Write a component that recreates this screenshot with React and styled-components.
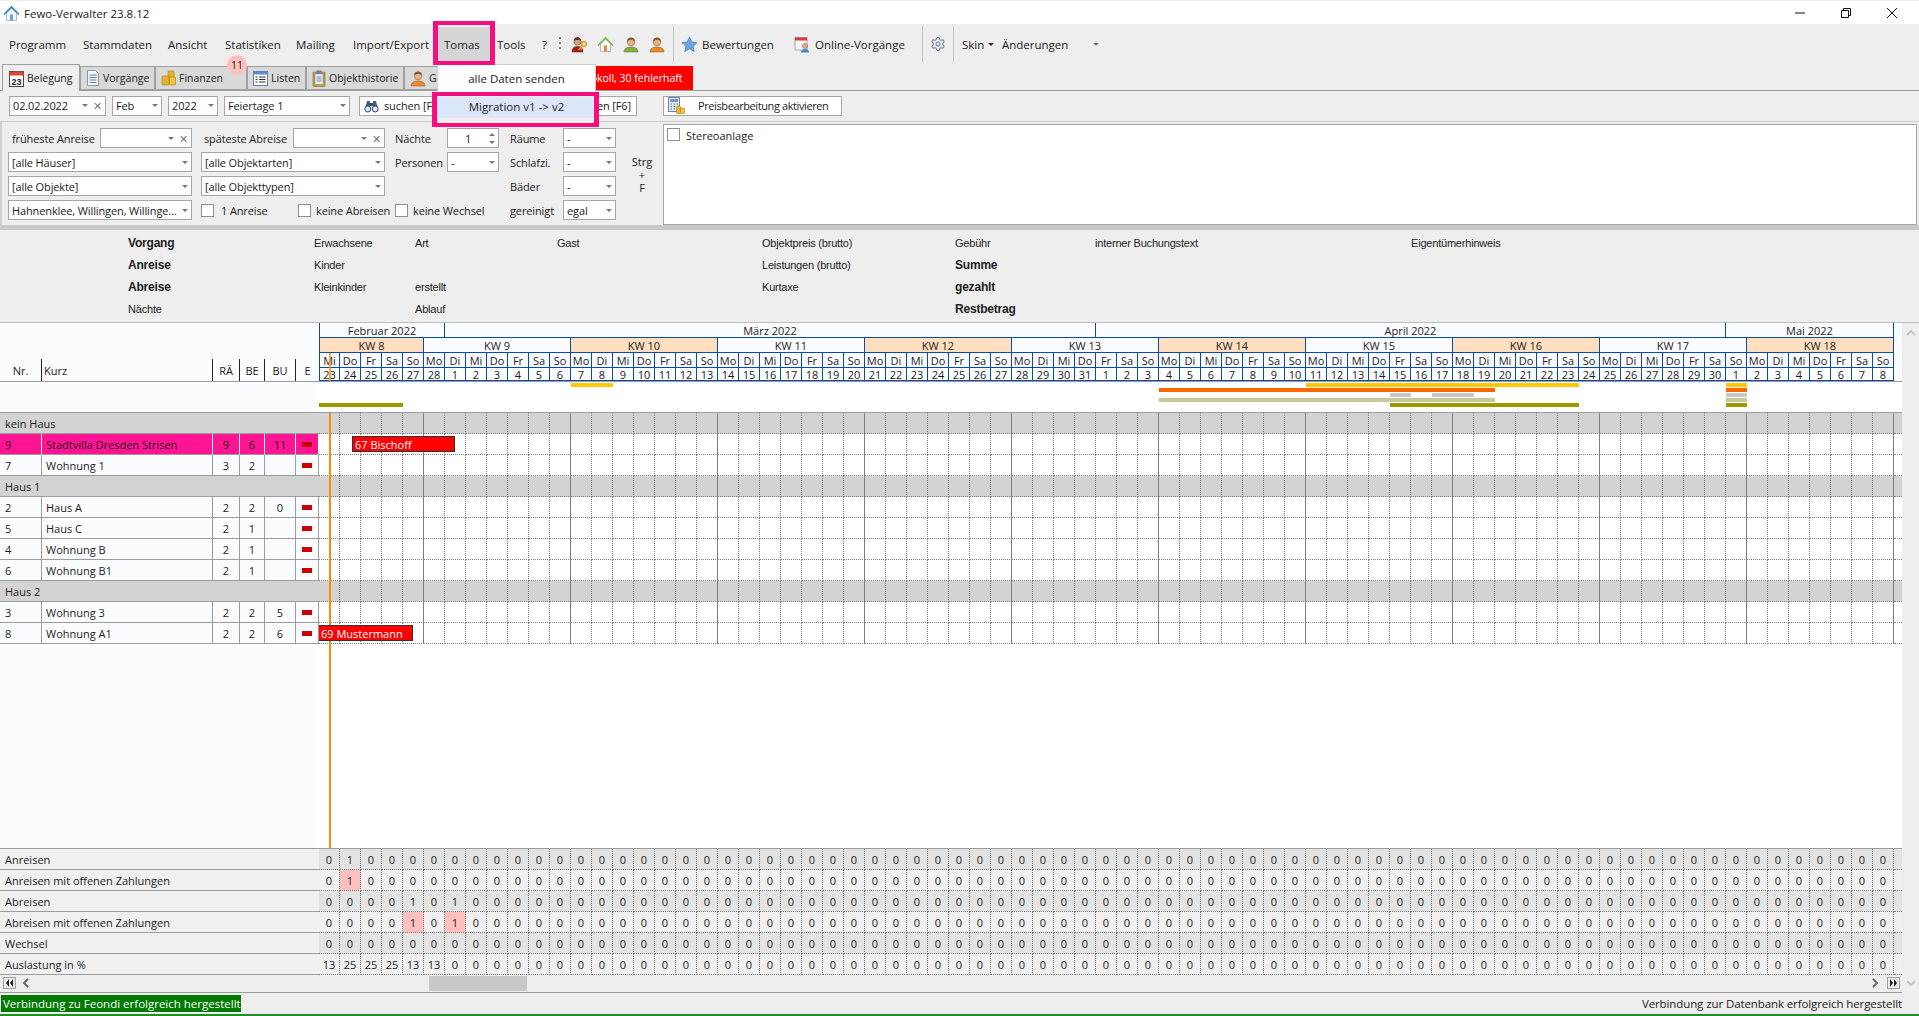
import React from "react";
import styled, { createGlobalStyle } from "styled-components";
import { Settings } from "lucide-react";

const DAY = 21;
const BLUE = "#0b4ba8";
const GRID = "#7d7d7d";
const WEEKDAYS = ["Mi", "Do", "Fr", "Sa", "So", "Mo", "Di"];
const dayIndexes = Array.from({ length: 75 }, (_, i) => i);
const dayNumber = (i) => new Date(2022, 1, 23 + i).getDate();
const isSunday = (i) => i % 7 === 4;

const months = [
  { label: "Februar 2022", days: 6 },
  { label: "März 2022", days: 31 },
  { label: "April 2022", days: 30 },
  { label: "Mai 2022", days: 8 },
];
const weeks = [8, 9, 10, 11, 12, 13, 14, 15, 16, 17, 18].map((n, i) => ({
  n,
  days: i === 0 ? 5 : 7,
}));

const occupancy = [
  { color: "#ffc800", top: 1, start: 12, days: 2 },
  { color: "#ffc800", top: 1, start: 47, days: 13 },
  { color: "#ffc800", top: 1, start: 67, days: 1 },
  { color: "#ff6600", top: 6, start: 40, days: 16 },
  { color: "#ff6600", top: 6, start: 67, days: 1 },
  { color: "#c8c8c8", top: 11, start: 51, days: 1 },
  { color: "#c8c8c8", top: 11, start: 53, days: 2 },
  { color: "#c8c8c8", top: 11, start: 67, days: 1 },
  { color: "#c8c89b", top: 16, start: 40, days: 16 },
  { color: "#c8c89b", top: 16, start: 67, days: 1 },
  { color: "#9b9b00", top: 21, start: 0, days: 4 },
  { color: "#9b9b00", top: 21, start: 51, days: 9 },
  { color: "#9b9b00", top: 21, start: 67, days: 1 },
];

const rows = [
  { group: "kein Haus" },
  { nr: 9, name: "Stadtvilla Dresden Strisen", ra: 9, be: 6, bu: 11, hot: true, booking: { label: "67 Bischoff", left: 33, width: 103 } },
  { nr: 7, name: "Wohnung 1", ra: 3, be: 2 },
  { group: "Haus 1" },
  { nr: 2, name: "Haus A", ra: 2, be: 2, bu: 0 },
  { nr: 5, name: "Haus C", ra: 2, be: 1 },
  { nr: 4, name: "Wohnung B", ra: 2, be: 1 },
  { nr: 6, name: "Wohnung B1", ra: 2, be: 1 },
  { group: "Haus 2" },
  { nr: 3, name: "Wohnung 3", ra: 2, be: 2, bu: 5 },
  { nr: 8, name: "Wohnung A1", ra: 2, be: 2, bu: 6, booking: { label: "69 Mustermann", left: 0, width: 94 } },
];

const totals = [
  { label: "Anreisen", values: { 1: 1 } },
  { label: "Anreisen mit offenen Zahlungen", values: { 1: 1 }, warn: [1] },
  { label: "Abreisen", values: { 4: 1, 6: 1 } },
  { label: "Abreisen mit offenen Zahlungen", values: { 4: 1, 6: 1 }, warn: [4, 6] },
  { label: "Wechsel", values: {} },
  { label: "Auslastung in %", values: { 0: 13, 1: 25, 2: 25, 3: 25, 4: 13, 5: 13 } },
];

const info = [
  ["Vorgang*", "Erwachsene", "Art", "Gast", "Objektpreis (brutto)", "Gebühr", "interner Buchungstext", "Eigentümerhinweis"],
  ["Anreise*", "Kinder", "", "", "Leistungen (brutto)", "Summe*", "", ""],
  ["Abreise*", "Kleinkinder", "erstellt", "", "Kurtaxe", "gezahlt*", "", ""],
  ["Nächte", "", "Ablauf", "", "", "Restbetrag*", "", ""],
];

const GlobalStyle = createGlobalStyle`
  html, body {
    margin: 0;
    padding: 0;
    overflow: hidden;
    background: #eeeeee;
  }
  body {
    font-family: "Open Sans", "Liberation Sans", sans-serif;
    font-size: 11.5px;
    color: #1c1c1c;
  }
`;

const Window = styled.div`
  position: relative;
  display: flex;
  flex-direction: column;
  width: 1919px;
  height: 1016px;
  overflow: hidden;
  background: #eeeeee;
`;

const TitleBar = styled.div`
  display: flex;
  align-items: center;
  flex: 0 0 24px;
  padding: 1px 0 0 3px;
  box-sizing: border-box;
  background: #ffffff;
  border-top: 1px solid #eeeeee;
  font-size: 11.5px;
`;
const TitleText = styled.span`
  margin-left: 4px;
  flex: 1;
`;
const WinButton = styled.div`
  display: flex;
  align-items: center;
  justify-content: center;
  width: 46px;
  height: 22px;
  &:last-child {
    margin-right: 4px;
  }
`;

const MenuBar = styled.div`
  display: flex;
  align-items: center;
  flex: 0 0 40px;
  padding-left: 2px;
`;
const MenuItem = styled.div`
  display: flex;
  align-items: center;
  box-sizing: border-box;
  width: ${(p) => p.$w}px;
  height: 34px;
  padding-left: 7px;
  background: ${(p) => (p.$open ? "#d6d6d6" : "transparent")};
  white-space: nowrap;
`;
const Grip = styled.div`
  width: 2px;
  height: 14px;
  margin: 0 5px 0 5px;
  background: repeating-linear-gradient(#8a8a8a 0 2px, transparent 2px 5px);
`;
const IconButton = styled.div`
  display: flex;
  align-items: center;
  justify-content: center;
  width: ${(p) => p.$w || 26}px;
  height: 24px;
`;
const BarSeparator = styled.div`
  width: 1px;
  height: 36px;
  margin: 0 ${(p) => p.$right || 0}px 0 ${(p) => p.$left || 0}px;
  background: #c4c4c4;
`;
const IconText = styled.div`
  display: flex;
  align-items: center;
  gap: 4px;
  width: ${(p) => p.$w}px;
  white-space: nowrap;
`;
const SmallCaret = styled.span`
  display: inline-block;
  flex: none;
  width: 0;
  height: 0;
  margin-left: ${(p) => p.$left || 0}px;
  border-left: 3px solid transparent;
  border-right: 3px solid transparent;
  border-top: 3px solid ${(p) => p.$color || "#333333"};
`;

const TabBar = styled.div`
  display: flex;
  align-items: flex-end;
  flex: 0 0 27px;
  box-sizing: border-box;
  padding-left: 2px;
  border-bottom: 1px solid #9c9c9c;
`;
const Tab = styled.div`
  position: relative;
  display: flex;
  align-items: center;
  gap: 3px;
  box-sizing: border-box;
  width: ${(p) => p.$w}px;
  height: ${(p) => (p.$active ? 27 : 24)}px;
  margin-bottom: ${(p) => (p.$active ? -1 : 0)}px;
  padding: 0 0 0 ${(p) => (p.$active ? 6 : 5)}px;
  background: ${(p) => (p.$active ? "#eeeeee" : "#d9d9d9")};
  border: 1px solid #a0a0a0;
  border-bottom: ${(p) => (p.$active ? "none" : "1px solid #a0a0a0")};
  font-size: 10.5px;
  white-space: nowrap;
`;
const AlertTab = styled.div`
  display: flex;
  align-items: center;
  box-sizing: border-box;
  width: 128px;
  height: 24px;
  padding-left: 5px;
  background: #ff0000;
  color: #ffffff;
  font-size: 10.5px;
  white-space: nowrap;
`;
const Badge = styled.span`
  position: absolute;
  top: -12px;
  right: -1px;
  display: flex;
  align-items: center;
  justify-content: center;
  width: 20px;
  height: 20px;
  border-radius: 50%;
  background: #ffc0c0;
  font-size: 10.5px;
`;

const Toolbar = styled.div`
  display: flex;
  align-items: center;
  flex: 0 0 31px;
  box-sizing: border-box;
  padding: 0 0 1px 9px;
  gap: 6px;
  border-bottom: 1px solid #cccccc;
`;
const Field = styled.div`
  display: flex;
  align-items: center;
  flex: none;
  box-sizing: border-box;
  width: ${(p) => p.$w}px;
  height: 20px;
  padding: 0 3px;
  background: #ffffff;
  border: 1px solid #a6a6a6;
  font-size: 11px;
  letter-spacing: -0.12px;
  white-space: nowrap;
`;
const FieldText = styled.span`
  flex: 1;
  min-width: 0;
`;
const Clear = styled.span`
  margin-left: 5px;
  color: #777777;
  font-size: 11px;
  line-height: 1;
`;
const ActionButton = styled(Field)`
  gap: 5px;
  justify-content: ${(p) => (p.$end ? "flex-end" : "flex-start")};
  margin-left: ${(p) => p.$left || 0}px;
  padding: 0 5px 0 4px;
`;
const ActionLabel = styled.span`
  margin-left: ${(p) => p.$left || 0}px;
  letter-spacing: ${(p) => (p.$tight ? "-0.4px" : "inherit")};
`;
const SpinArrows = styled.span`
  display: flex;
  flex-direction: column;
  gap: 5px;
`;
const SpinUp = styled.span`
  width: 0;
  height: 0;
  border-left: 3px solid transparent;
  border-right: 3px solid transparent;
  border-bottom: 3px solid #777777;
`;
const SpinDown = styled(SpinUp)`
  border-bottom: none;
  border-top: 3px solid #777777;
`;
const SpinValue = styled.span`
  flex: 1;
  padding-left: 14px;
`;

const FilterPanel = styled.div`
  display: flex;
  flex: 0 0 108px;
  box-sizing: border-box;
  padding: 2px 2px 0 2px;
  border-left: 2px solid #d0d0d0;
  border-bottom: 5px solid #c8c8c8;
`;
const FilterGrid = styled.div`
  display: grid;
  grid-template-columns: 193px 194px 115px 121px 32px;
  grid-template-rows: repeat(4, 20px);
  row-gap: 4px;
  padding: 4px 0 0 4px;
`;
const FilterCell = styled.div`
  display: flex;
  align-items: center;
  font-size: 11px;
  letter-spacing: -0.12px;
  white-space: nowrap;
`;
const FilterLabel = styled.span`
  flex: 0 0 ${(p) => p.$w}px;
  padding-left: ${(p) => p.$pad || 0}px;
  box-sizing: border-box;
`;
const CheckBox = styled.span`
  flex: none;
  box-sizing: border-box;
  width: 13px;
  height: 13px;
  margin-right: ${(p) => p.$gap}px;
  background: #ffffff;
  border: 1px solid #8f8f8f;
`;
const ShortcutHint = styled.div`
  grid-column: 5;
  grid-row: 2 / span 2;
  align-self: center;
  width: 22px;
  text-align: center;
  font-size: 11px;
  line-height: 13px;
`;
const FeatureList = styled.div`
  display: flex;
  align-items: flex-start;
  flex: 1;
  box-sizing: border-box;
  height: 101px;
  padding: 3px;
  background: #ffffff;
  border: 1px solid #a6a6a6;
  font-size: 11px;
`;

const InfoPanel = styled.div`
  display: grid;
  grid-template-columns: 186px 101px 142px 205px 193px 140px 316px 1fr;
  grid-template-rows: repeat(4, 22px);
  align-items: center;
  flex: 0 0 93px;
  box-sizing: border-box;
  padding: 2px 0 0 128px;
  border-bottom: 1px solid #bdbdbd;
  font-family: "Liberation Sans", sans-serif;
  font-size: 11px;
  letter-spacing: -0.2px;
`;
const InfoText = styled.span`
  font-weight: ${(p) => (p.$strong ? 700 : 400)};
  font-size: ${(p) => (p.$strong ? 12 : 11)}px;
`;

const MainArea = styled.div`
  display: flex;
  flex: 1;
  min-height: 0;
`;
const Content = styled.div`
  display: flex;
  flex-direction: column;
  width: 1902px;
  background: #ffffff;
  font-size: 11px;
`;
const VScroll = styled.div`
  display: flex;
  flex-direction: column;
  align-items: center;
  justify-content: space-between;
  flex: 1;
  padding: 6px 0 4px;
  box-sizing: border-box;
  color: #c0c0c0;
`;

const Header = styled.div`
  display: flex;
  flex: 0 0 59px;
  box-sizing: border-box;
  border-bottom: 1px solid #9c9c9c;
  background: #fbfcff;
`;
const HeaderLeft = styled.div`
  display: flex;
  align-items: flex-end;
  width: 319px;
`;
const HeaderCol = styled.div`
  display: flex;
  align-items: center;
  justify-content: ${(p) => (p.$left ? "flex-start" : "center")};
  box-sizing: border-box;
  width: ${(p) => p.$w}px;
  height: 22px;
  padding-left: ${(p) => (p.$left ? 2 : 0)}px;
  border-right: ${(p) => (p.$last ? "none" : "1px solid #222222")};
`;
const Timeline = styled.div`
  position: relative;
  display: flex;
  flex-direction: column;
`;
const TimeRow = styled.div`
  display: flex;
  height: ${(p) => p.$h}px;
`;
const TimeCell = styled.div`
  display: flex;
  align-items: center;
  justify-content: center;
  box-sizing: border-box;
  width: ${(p) => p.$days * DAY}px;
  background: ${(p) => (p.$even ? "#ffdfbf" : "transparent")};
  border-right: 1px solid ${BLUE};
  border-bottom: 1px solid ${BLUE};
  border-left: ${(p) => (p.$first ? `1px solid ${BLUE}` : "none")};
  white-space: nowrap;
`;
const HeaderTodayLine = styled.div`
  position: absolute;
  top: 30px;
  bottom: 0;
  left: 10px;
  width: 2px;
  background: rgba(255, 140, 0, 0.75);
`;

const OccupancyStrip = styled.div`
  display: flex;
  flex: 0 0 31px;
  box-sizing: border-box;
  border-bottom: 1px solid #9c9c9c;
`;
const StripLeft = styled.div`
  width: 319px;
  background: #fbfcff;
`;
const StripCanvas = styled.div`
  position: relative;
  flex: 1;
`;
const OccupancyBar = styled.div`
  position: absolute;
  top: ${(p) => p.$top}px;
  left: ${(p) => p.$start * DAY}px;
  width: ${(p) => p.$days * DAY}px;
  height: 4px;
  background: ${(p) => p.$color};
`;

const Board = styled.div`
  position: relative;
  display: flex;
  flex-direction: column;
  flex: 1;
  min-height: 0;
`;
const BoardFill = styled.div`
  display: flex;
  flex: 1;
`;
const TodayLine = styled.div`
  position: absolute;
  top: 0;
  bottom: 0;
  left: 329px;
  width: 2px;
  background: #ff8c00;
  z-index: 0;
`;
const Row = styled.div`
  display: flex;
  flex: 0 0 21px;
`;
const GroupLabel = styled.div`
  display: flex;
  align-items: center;
  box-sizing: border-box;
  width: 319px;
  padding-left: 5px;
  background: #d3d3d3;
  border-bottom: 1px solid #9c9c9c;
`;
const ObjectCell = styled.div`
  display: flex;
  align-items: center;
  box-sizing: border-box;
  width: ${(p) => p.$w}px;
  padding-left: ${(p) => p.$pad}px;
  justify-content: ${(p) => (p.$center ? "center" : "flex-start")};
  background: ${(p) => (p.$hot ? "#ff1493" : "#fbfcff")};
  border-right: 1px solid ${(p) => (p.$hot ? "#ffffff" : "#9c9c9c")};
  border-bottom: 1px solid #9c9c9c;
  white-space: nowrap;
`;
const StatusDash = styled.span`
  width: 10px;
  height: 5px;
  background: #cc0000;
`;
const DayTrack = styled.div`
  position: relative;
  display: flex;
  flex: 1;
`;
const DayCell = styled.div`
  flex: 0 0 ${DAY}px;
  box-sizing: border-box;
  background: ${(p) => (p.$group ? "#d3d3d3" : "#ffffff")};
  border-right: 1px ${(p) => (p.$sunday ? "solid" : "dotted")} ${GRID};
  border-bottom: 1px dotted ${GRID};
`;
const DayStub = styled.div`
  flex: 1;
  box-sizing: border-box;
  background: ${(p) => (p.$group ? "#d3d3d3" : "#ffffff")};
  border-bottom: 1px dotted ${GRID};
`;
const Booking = styled.div`
  position: absolute;
  top: 2px;
  left: ${(p) => p.$left}px;
  z-index: 1;
  display: flex;
  align-items: center;
  box-sizing: border-box;
  width: ${(p) => p.$width}px;
  height: 16px;
  padding-left: 2px;
  background: #ff0000;
  border: 1px solid #333333;
  border-left: ${(p) => (p.$left === 0 ? "none" : "1px solid #333333")};
  color: #ffffff;
  white-space: nowrap;
`;
const EmptyLeft = styled.div`
  width: 319px;
  background: #fbfcff;
`;

const Totals = styled.div`
  display: flex;
  flex-direction: column;
  border-top: 1px solid #9c9c9c;
`;
const TotalLabel = styled.div`
  display: flex;
  align-items: center;
  box-sizing: border-box;
  width: 319px;
  padding-left: 5px;
  background: #f0f0f0;
  border-bottom: 1px solid #9c9c9c;
`;
const TotalCell = styled.div`
  display: flex;
  align-items: center;
  justify-content: center;
  flex: 0 0 ${DAY}px;
  box-sizing: border-box;
  background: ${(p) => (p.$warn ? "#ffbfbf" : p.$odd ? "#e3e3e3" : "#f0f0f0")};
  border-right: 1px dotted ${GRID};
  border-bottom: 1px dotted ${GRID};
`;
const TotalStub = styled.div`
  flex: 1;
  background: ${(p) => (p.$odd ? "#e3e3e3" : "#f0f0f0")};
  border-bottom: 1px dotted ${GRID};
`;

const HScroll = styled.div`
  display: flex;
  align-items: center;
  flex: 0 0 18px;
  box-sizing: border-box;
  padding: 0 2px 1px 3px;
  border-bottom: 1px solid #9c9c9c;
  background: #eeeeee;
  color: #666666;
`;
const ScrollEnd = styled.div`
  display: flex;
  align-items: center;
  justify-content: center;
  box-sizing: border-box;
  width: 13px;
  height: 12px;
  border: 1px solid #a0a0a0;
  color: #222222;
`;
const ScrollTrack = styled.div`
  display: flex;
  align-items: center;
  flex: 1;
  padding: 0 6px;
`;
const ScrollThumb = styled.div`
  width: 98px;
  height: 15px;
  margin-left: 397px;
  margin-right: auto;
  background: #c8c8c8;
`;

const StatusBar = styled.div`
  display: flex;
  align-items: center;
  justify-content: space-between;
  flex: 0 0 23px;
  box-sizing: border-box;
  padding: 0 17px 1px 1px;
  border-bottom: 2px solid #228b22;
  font-size: 11.5px;
`;
const StatusChip = styled.div`
  display: flex;
  align-items: center;
  width: 240px;
  height: 17px;
  padding-left: 2px;
  box-sizing: border-box;
  background: #007a00;
  color: #ffffff;
  white-space: nowrap;
`;
const StatusText = styled.span`
  letter-spacing: -0.1px;
`;

const DropMenu = styled.div`
  position: absolute;
  top: 64px;
  left: 437px;
  width: 159px;
  height: 60px;
  box-sizing: border-box;
  background: #eeeeee;
  border: 1px solid #cfcfcf;
  z-index: 5;
`;
const DropItem = styled.div`
  display: flex;
  align-items: center;
  justify-content: center;
  box-sizing: border-box;
  height: ${(p) => p.$h}px;
  margin-top: ${(p) => p.$top || 0}px;
  padding-bottom: ${(p) => p.$bottom}px;
  background: ${(p) => (p.$active ? "#dbe6f8" : "#ffffff")};
  white-space: nowrap;
`;
const Marker = styled.div`
  position: absolute;
  top: ${(p) => p.$top}px;
  left: ${(p) => p.$left}px;
  width: ${(p) => p.$w}px;
  height: ${(p) => p.$h}px;
  box-sizing: border-box;
  border: solid #f70d7f;
  border-width: 4px 5px;
  z-index: 6;
`;

function Person({ shirt }) {
  return (
    <svg width="16" height="17" viewBox="0 0 16 17">
      <path d="M1 16c0-3.500 3-5 7-5s7 1.500 7 5z" fill={shirt} stroke="#7a5a20" strokeWidth=".5" />
      <circle cx="8" cy="6" r="3.800" fill="#e3b48c" stroke="#8a5a3a" strokeWidth=".6" />
      <path d="M4.200 5.500C4 2.500 6 1.500 8 1.500s4 1 3.800 4C10.500 4 9 4 8 4S5.500 4 4.200 5.500z" fill="#8a5a2e" />
    </svg>
  );
}

function PersonKey() {
  return (
    <svg width="17" height="17" viewBox="0 0 17 17">
      <path d="M1 16c0-4 2-5.500 5.500-5.500S12 12 12 16z" fill="#a0201c" stroke="#5e1210" strokeWidth=".5" />
      <circle cx="6.500" cy="5.500" r="3.600" fill="#d9a27c" stroke="#6a3e28" strokeWidth=".6" />
      <path d="M3 5C3 2 5 1 6.500 1S10 2 10 5C8.500 3.600 4.500 3.600 3 5z" fill="#5a3420" />
      <circle cx="13" cy="8" r="2.300" fill="none" stroke="#d8991e" strokeWidth="1.500" />
      <path d="M11.500 10 7.500 14M9.500 12l1.500 1.500" stroke="#d8991e" strokeWidth="1.500" fill="none" />
    </svg>
  );
}

function House({ size = 17, roof = "#7cb342", door = "#e8862a" }) {
  return (
    <svg width={size} height={size} viewBox="0 0 17 17">
      <path d="M3.500 8v7.500h10V8L8.500 3z" fill="#f6f8fb" stroke="#8aa2c0" strokeWidth=".7" />
      <path d="M1 9.500 8.500 2 16 9.500" fill="none" stroke={roof} strokeWidth="1.600" />
      <rect x="7" y="9.500" width="3" height="6" fill={door} />
    </svg>
  );
}

function Star() {
  return (
    <svg width="17" height="17" viewBox="0 0 17 17">
      <path d="m8.500 1 2.300 5 5.200.6-3.900 3.600 1.100 5.300-4.700-2.700-4.700 2.700 1.100-5.300L1 6.600 6.200 6z" fill="#6aa6de" stroke="#4a7fb5" strokeWidth=".8" />
    </svg>
  );
}

function OnlineCalendar() {
  return (
    <svg width="17" height="17" viewBox="0 0 17 17">
      <rect x="1" y="1.500" width="12" height="12.500" fill="#f6f6f6" stroke="#9a9a9a" strokeWidth=".8" />
      <rect x="1" y="1.500" width="12" height="3" fill="#d93a3a" />
      <path d="M7 16.500c0-2.500 2-3.500 4-3.500s4 1 4 3.500z" fill="#3f86c8" />
      <circle cx="11" cy="10" r="2.500" fill="#e0b088" stroke="#7a4a2a" strokeWidth=".5" />
    </svg>
  );
}

function CalendarDay() {
  return (
    <svg width="15" height="17" viewBox="0 0 15 17">
      <rect x=".5" y="1.500" width="14" height="15" fill="#ffffff" stroke="#444444" />
      <rect x=".5" y="1.500" width="14" height="4" fill="#d4483a" />
      <text x="7.500" y="14.500" textAnchor="middle" fontSize="9" fontWeight="700" fontFamily="Liberation Sans" fill="#222222">23</text>
    </svg>
  );
}

function Doc() {
  return (
    <svg width="14" height="16" viewBox="0 0 14 16">
      <path d="M1.500.5h8l3 3v12h-11z" fill="#f4f7fb" stroke="#8d99a8" />
      <path d="M3.500 5h7M3.500 7.500h7M3.500 10h7M3.500 12.500h7" stroke="#5f7fa8" />
    </svg>
  );
}

function Coins() {
  return (
    <svg width="15" height="16" viewBox="0 0 15 16">
      <rect x="7" y="1" width="6" height="9" rx="1" fill="#e8b32a" stroke="#a8791a" strokeWidth=".6" />
      <rect x="8.500" y="7" width="6" height="8" rx="1" fill="#f0c63a" stroke="#a8791a" strokeWidth=".6" />
      <rect x="1" y="6" width="7" height="9" rx="1" fill="#e8b32a" stroke="#a8791a" strokeWidth=".6" />
    </svg>
  );
}

function ListIcon() {
  return (
    <svg width="15" height="15" viewBox="0 0 15 15">
      <rect x=".5" y=".5" width="14" height="14" fill="#ffffff" stroke="#5c7fae" />
      <rect x=".5" y=".5" width="14" height="3" fill="#5b8bd0" />
      <path d="M2.500 6h2M6 6h6.500M2.500 8.500h2M6 8.500h6.500M2.500 11h2M6 11h6.500" stroke="#333333" />
    </svg>
  );
}

function Clipboard() {
  return (
    <svg width="14" height="17" viewBox="0 0 14 17">
      <rect x="1" y="2" width="12" height="14.500" rx="1" fill="#c99a3a" stroke="#8a6420" strokeWidth=".6" />
      <rect x="3" y="4" width="8" height="10.500" fill="#eef4fb" stroke="#5f7fa8" strokeWidth=".5" />
      <rect x="4.500" y=".5" width="5" height="3" fill="#5f7fa8" />
      <path d="M4.500 7h5M4.500 9h5M4.500 11h5" stroke="#4a6a94" strokeWidth=".8" />
    </svg>
  );
}

function Binoculars() {
  return (
    <svg width="15" height="15" viewBox="0 0 15 15">
      <path d="M1 11 3 3h3v8zM14 11l-2-8H9v8z" fill="#3f5f8a" />
      <circle cx="3.800" cy="11" r="3" fill="#dfe8f3" stroke="#2f4a70" />
      <circle cx="11.200" cy="11" r="3" fill="#dfe8f3" stroke="#2f4a70" />
      <rect x="6" y="5" width="3" height="3" fill="#2f4a70" />
    </svg>
  );
}

function Calculator() {
  return (
    <svg width="17" height="17" viewBox="0 0 17 17">
      <rect x=".5" y=".5" width="11" height="14" fill="#e8eef6" stroke="#6a7f9c" />
      <rect x="2" y="2" width="8" height="3" fill="#6f97c9" />
      <path d="M2.500 7h1.500M5.500 7H7M8.500 7H10M2.500 9.500h1.500M5.500 9.500H7M2.500 12h1.500M5.500 12H7" stroke="#516b8e" />
      <rect x="8.500" y="9" width="4" height="7.500" rx=".8" fill="#e8b32a" stroke="#a8791a" strokeWidth=".6" />
      <rect x="12.500" y="11" width="4" height="5.500" rx=".8" fill="#f0c63a" stroke="#a8791a" strokeWidth=".6" />
    </svg>
  );
}

function Chevron({ dir }) {
  const d = {
    up: "M1 6 5 2l4 4",
    down: "M1 2l4 4 4-4",
    left: "M6 1 2 5l4 4",
    right: "M2 1l4 4-4 4",
  }[dir];
  return (
    <svg width="10" height="10" viewBox="0 0 10 10">
      <path d={d} fill="none" stroke="currentColor" strokeWidth="1.800" />
    </svg>
  );
}

function DoubleArrow({ right }) {
  return (
    <svg width="9" height="8" viewBox="0 0 9 8">
      <path d={right ? "M1 0l3 4-3 4zM5 0l3 4-3 4z" : "M4 0 1 4l3 4zM8 0 5 4l3 4z"} fill="currentColor" />
    </svg>
  );
}

function Select({ w, value }) {
  return (
    <Field $w={w}>
      <FieldText>{value}</FieldText>
      <SmallCaret $color="#777777" $left={3} />
    </Field>
  );
}

function ClearableSelect({ w, value }) {
  return (
    <Field $w={w}>
      <FieldText>{value}</FieldText>
      <SmallCaret $color="#777777" />
      <Clear>✕</Clear>
    </Field>
  );
}

function DayCells({ group }) {
  return (
    <>
      {dayIndexes.map((i) => (
        <DayCell key={i} $group={group} $sunday={isSunday(i)} />
      ))}
      <DayStub $group={group} />
    </>
  );
}

export default function App() {
  return (
    <Window>
      <GlobalStyle />
      <TitleBar>
        <House size={17} roof="#3f7fc0" door="#6aa6de" />
        <TitleText>Fewo-Verwalter 23.8.12</TitleText>
        <WinButton>
          <svg width="10" height="10" viewBox="0 0 10 10"><path d="M0 5h10" stroke="#111" /></svg>
        </WinButton>
        <WinButton>
          <svg width="10" height="10" viewBox="0 0 10 10"><path d="M.5 2.500h7v7h-7zM2.500 2.500v-2h7v7h-2" fill="none" stroke="#111" /></svg>
        </WinButton>
        <WinButton>
          <svg width="10" height="10" viewBox="0 0 10 10"><path d="m0 0 10 10M10 0 0 10" stroke="#111" /></svg>
        </WinButton>
      </TitleBar>

      <MenuBar>
        <MenuItem $w={74}>Programm</MenuItem>
        <MenuItem $w={85}>Stammdaten</MenuItem>
        <MenuItem $w={57}>Ansicht</MenuItem>
        <MenuItem $w={71}>Statistiken</MenuItem>
        <MenuItem $w={57}>Mailing</MenuItem>
        <MenuItem $w={91}>Import/Export</MenuItem>
        <MenuItem $w={53} $open>Tomas</MenuItem>
        <MenuItem $w={45}>Tools</MenuItem>
        <MenuItem $w={19}>?</MenuItem>
        <Grip />
        <IconButton><PersonKey /></IconButton>
        <IconButton><House /></IconButton>
        <IconButton><Person shirt="#7cb342" /></IconButton>
        <IconButton><Person shirt="#ef8a2a" /></IconButton>
        <BarSeparator $left={3} $right={7} />
        <IconText $w={113}><Star />Bewertungen</IconText>
        <IconText $w={128}><OnlineCalendar />Online-Vorgänge</IconText>
        <BarSeparator $right={6} />
        <IconButton $w={18}><Settings size={16} color="#6f8199" strokeWidth={1.6} /></IconButton>
        <BarSeparator $left={6} $right={8} />
        <IconText $w={40}>Skin<SmallCaret /></IconText>
        <IconText $w={91}>Änderungen</IconText>
        <SmallCaret $color="#777777" />
      </MenuBar>

      <TabBar>
        <Tab $w={78} $active><CalendarDay />Belegung</Tab>
        <Tab $w={75}><Doc />Vorgänge</Tab>
        <Tab $w={92}><Coins />Finanzen<Badge>11</Badge></Tab>
        <Tab $w={59}><ListIcon />Listen</Tab>
        <Tab $w={98}><Clipboard />Objekthistorie</Tab>
        <Tab $w={161}><Person shirt="#ef8a2a" />Gäste</Tab>
        <AlertTab>Protokoll, 30 fehlerhaft</AlertTab>
      </TabBar>

      <Toolbar>
        <ClearableSelect w={97} value="02.02.2022" />
        <Select w={50} value="Feb" />
        <Select w={50} value="2022" />
        <Select w={126} value="Feiertage 1" />
        <ActionButton $w={110} $left={3}><Binoculars />suchen [F5]</ActionButton>
        <ActionButton $w={162} $end>Filter löschen [F6]</ActionButton>
        <ActionButton $w={179} $left={20}><Calculator /><ActionLabel $left={8} $tight>Preisbearbeitung aktivieren</ActionLabel></ActionButton>
      </Toolbar>

      <FilterPanel>
        <FilterGrid>
          <FilterCell>
            <FilterLabel $w={92} $pad={4}>früheste Anreise</FilterLabel>
            <ClearableSelect w={92} value="" />
          </FilterCell>
          <FilterCell>
            <FilterLabel $w={92} $pad={3}>späteste Abreise</FilterLabel>
            <ClearableSelect w={92} value="" />
          </FilterCell>
          <FilterCell>
            <FilterLabel $w={52}>Nächte</FilterLabel>
            <Field $w={52}>
              <SpinValue>1</SpinValue>
              <SpinArrows><SpinUp /><SpinDown /></SpinArrows>
            </Field>
          </FilterCell>
          <FilterCell>
            <FilterLabel $w={53}>Räume</FilterLabel>
            <Select w={53} value="-" />
          </FilterCell>
          <FilterCell />

          <FilterCell><Select w={184} value="[alle Häuser]" /></FilterCell>
          <FilterCell><Select w={184} value="[alle Objektarten]" /></FilterCell>
          <FilterCell>
            <FilterLabel $w={52}>Personen</FilterLabel>
            <Select w={52} value="-" />
          </FilterCell>
          <FilterCell>
            <FilterLabel $w={53}>Schlafzi.</FilterLabel>
            <Select w={53} value="-" />
          </FilterCell>
          <ShortcutHint>Strg<br />+<br />F</ShortcutHint>

          <FilterCell><Select w={184} value="[alle Objekte]" /></FilterCell>
          <FilterCell><Select w={184} value="[alle Objekttypen]" /></FilterCell>
          <FilterCell />
          <FilterCell>
            <FilterLabel $w={53}>Bäder</FilterLabel>
            <Select w={53} value="-" />
          </FilterCell>

          <FilterCell><Select w={184} value="Hahnenklee, Willingen, Willinge..." /></FilterCell>
          <FilterCell>
            <CheckBox $gap={7} />
            <FilterLabel $w={77}>1 Anreise</FilterLabel>
            <CheckBox $gap={5} />
            keine Abreisen
          </FilterCell>
          <FilterCell>
            <CheckBox $gap={5} />
            keine Wechsel
          </FilterCell>
          <FilterCell>
            <FilterLabel $w={53}>gereinigt</FilterLabel>
            <Select w={53} value="egal" />
          </FilterCell>
        </FilterGrid>
        <FeatureList>
          <CheckBox $gap={6} />
          Stereoanlage
        </FeatureList>
      </FilterPanel>

      <InfoPanel>
        {info.flat().map((text, i) => (
          <InfoText key={i} $strong={text.endsWith("*")}>{text.replace("*", "")}</InfoText>
        ))}
      </InfoPanel>

      <MainArea>
        <Content>
          <Header>
            <HeaderLeft>
              <HeaderCol $w={42}>Nr.</HeaderCol>
              <HeaderCol $w={171} $left>Kurz</HeaderCol>
              <HeaderCol $w={27}>RÄ</HeaderCol>
              <HeaderCol $w={25}>BE</HeaderCol>
              <HeaderCol $w={31}>BU</HeaderCol>
              <HeaderCol $w={23} $last>E</HeaderCol>
            </HeaderLeft>
            <Timeline>
              <TimeRow $h={15}>
                {months.map((m, i) => (
                  <TimeCell key={m.label} $days={m.days} $first={i === 0}>{m.label}</TimeCell>
                ))}
              </TimeRow>
              <TimeRow $h={15}>
                {weeks.map((w, i) => (
                  <TimeCell key={w.n} $days={w.days} $first={i === 0} $even={w.n % 2 === 0}>KW {w.n}</TimeCell>
                ))}
              </TimeRow>
              <TimeRow $h={15}>
                {dayIndexes.map((i) => (
                  <TimeCell key={i} $days={1} $first={i === 0}>{WEEKDAYS[i % 7]}</TimeCell>
                ))}
              </TimeRow>
              <TimeRow $h={13}>
                {dayIndexes.map((i) => (
                  <TimeCell key={i} $days={1} $first={i === 0}>{dayNumber(i)}</TimeCell>
                ))}
              </TimeRow>
              <HeaderTodayLine />
            </Timeline>
          </Header>

          <OccupancyStrip>
            <StripLeft />
            <StripCanvas>
              {occupancy.map((b, i) => (
                <OccupancyBar key={i} $color={b.color} $top={b.top} $start={b.start} $days={b.days} />
              ))}
            </StripCanvas>
          </OccupancyStrip>

          <Board>
            {rows.map((r, i) =>
              r.group ? (
                <Row key={i}>
                  <GroupLabel>{r.group}</GroupLabel>
                  <DayTrack><DayCells group /></DayTrack>
                </Row>
              ) : (
                <Row key={i}>
                  <ObjectCell $w={42} $pad={5} $hot={r.hot}>{r.nr}</ObjectCell>
                  <ObjectCell $w={171} $pad={4} $hot={r.hot}>{r.name}</ObjectCell>
                  <ObjectCell $w={27} $center $hot={r.hot}>{r.ra}</ObjectCell>
                  <ObjectCell $w={25} $center $hot={r.hot}>{r.be}</ObjectCell>
                  <ObjectCell $w={31} $center $hot={r.hot}>{r.bu}</ObjectCell>
                  <ObjectCell $w={23} $center $hot={r.hot}><StatusDash /></ObjectCell>
                  <DayTrack>
                    <DayCells />
                    {r.booking && (
                      <Booking $left={r.booking.left} $width={r.booking.width}>{r.booking.label}</Booking>
                    )}
                  </DayTrack>
                </Row>
              )
            )}
            <BoardFill><EmptyLeft /></BoardFill>
            <TodayLine />
          </Board>

          <Totals>
            {totals.map((t, r) => (
              <Row key={t.label}>
                <TotalLabel>{t.label}</TotalLabel>
                {dayIndexes.map((i) => (
                  <TotalCell key={i} $odd={r % 2 === 0} $warn={t.warn && t.warn.includes(i)}>
                    {t.values[i] || 0}
                  </TotalCell>
                ))}
                <TotalStub $odd={r % 2 === 0} />
              </Row>
            ))}
          </Totals>
          <HScroll>
            <ScrollEnd><DoubleArrow /></ScrollEnd>
            <ScrollTrack>
              <Chevron dir="left" />
              <ScrollThumb />
              <Chevron dir="right" />
            </ScrollTrack>
            <ScrollEnd><DoubleArrow right /></ScrollEnd>
          </HScroll>
        </Content>
        <VScroll>
          <Chevron dir="up" />
          <Chevron dir="down" />
        </VScroll>
      </MainArea>

      <StatusBar>
        <StatusChip>Verbindung zu Feondi erfolgreich hergestellt</StatusChip>
        <StatusText>Verbindung zur Datenbank erfolgreich hergestellt</StatusText>
      </StatusBar>

      <DropMenu>
        <DropItem $h={28} $bottom={2}>alle Daten senden</DropItem>
        <DropItem $h={21} $top={4} $bottom={3} $active>Migration v1 -&gt; v2</DropItem>
      </DropMenu>
      <Marker $top={21} $left={433} $w={62} $h={44} />
      <Marker $top={92} $left={432} $w={167} $h={35} />
    </Window>
  );
}
